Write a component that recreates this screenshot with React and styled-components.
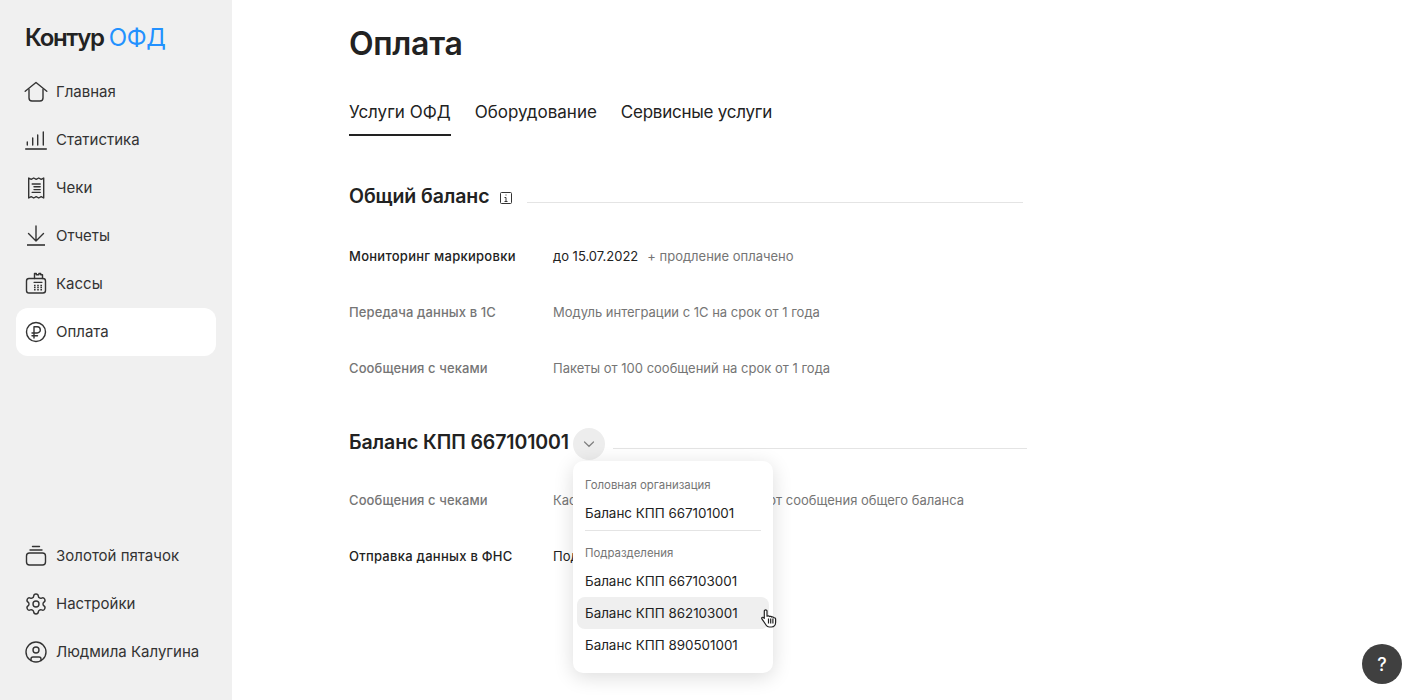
import React from "react";
import styled, { createGlobalStyle } from "styled-components";
import { Settings, CircleUser } from "lucide-react";

const GlobalStyle = createGlobalStyle`
  html, body {
    margin: 0;
    height: 100%;
    background: #fff;
    color: #222;
    font-family: Inter, "Noto Sans", "Liberation Sans", sans-serif;
  }
  * {
    box-sizing: border-box;
  }
`;

const Page = styled.div`
  display: flex;
  height: 700px;
  overflow: hidden;
`;

const Sidebar = styled.aside`
  width: 232px;
  flex-shrink: 0;
  padding: 0 16px 24px;
  display: flex;
  flex-direction: column;
  background: #f0f0f0;
`;

const Logo = styled.div`
  height: 68px;
  padding: 7px 0 0 9px;
  display: flex;
  align-items: center;
  gap: 5px;
  font-size: 24px;
  span:first-child {
    font-weight: 600;
    letter-spacing: -1.3px;
    color: #222;
  }
  span:last-child {
    color: #2291ff;
    letter-spacing: -0.4px;
  }
`;

const Nav = styled.nav`
  display: flex;
  flex-direction: column;
  &:last-child {
    margin-top: auto;
  }
`;

const NavItem = styled.a`
  height: 48px;
  padding: 0 8px;
  display: flex;
  align-items: center;
  gap: 8px;
  border-radius: 12px;
  font-size: 15px;
  line-height: 22px;
  color: #333;
  background: ${(p) => (p.$active ? "#fff" : "transparent")};
  svg {
    flex-shrink: 0;
  }
  span {
    margin-top: -1px;
  }
`;

const Main = styled.main`
  flex: 1;
  padding-left: 117px;
`;

const Title = styled.h1`
  margin: 0;
  height: 88px;
  line-height: 88px;
  font-size: 32px;
  font-weight: 600;
  letter-spacing: -0.3px;
  color: #222;
`;

const Tabs = styled.div`
  display: flex;
  gap: 24px;
  height: 48px;
`;

const Tab = styled.a`
  padding-top: 12px;
  font-size: 17px;
  line-height: 24px;
  letter-spacing: ${(p) => (p.$tight ? "-0.25px" : "0")};
  color: #222;
  border-bottom: 2px solid ${(p) => (p.$active ? "#222" : "transparent")};
`;

const Section = styled.section`
  width: ${(p) => p.$width}px;
  margin-top: ${(p) => p.$top}px;
`;

const Heading = styled.div`
  position: relative;
  height: 32px;
  display: flex;
  align-items: center;
  margin-bottom: ${(p) => p.$below}px;
`;

const HeadingText = styled.h2`
  margin: 0;
  font-size: 19.5px;
  letter-spacing: -0.1px;
  line-height: 32px;
  font-weight: 600;
  color: #222;
  white-space: nowrap;
`;

const InfoMark = styled.svg`
  margin-left: 11px;
  margin-top: 4px;
  flex-shrink: 0;
`;

const Toggle = styled.div`
  width: 32px;
  height: 32px;
  margin: 4px 0 0 4px;
  flex-shrink: 0;
  display: flex;
  align-items: center;
  justify-content: center;
  border-radius: 50%;
  background: #ededed;
`;

const Rule = styled.div`
  flex: 1;
  height: 1px;
  margin: 13px 0 0 ${(p) => p.$gap}px;
  background: #e4e4e4;
`;

const Row = styled.div`
  display: flex;
  align-items: center;
  height: 56px;
  font-size: 13px;
`;

const Label = styled.div`
  width: 204px;
  flex-shrink: 0;
  font-weight: 500;
  letter-spacing: ${(p) => (p.$on ? "0.27px" : "0.1px")};
  color: ${(p) => (p.$on ? "#222" : "#757575")};
`;

const Value = styled.div`
  color: ${(p) => (p.$on ? "#222" : "#757575")};
  white-space: nowrap;
  span {
    margin-left: 9px;
    color: #757575;
  }
`;

const Menu = styled.div`
  position: absolute;
  left: 224px;
  top: 35px;
  z-index: 2;
  width: 200px;
  height: 212px;
  padding: 12px 4px;
  background: #fff;
  border-radius: 10px;
  box-shadow: 0 4px 20px rgba(0, 0, 0, 0.14);
`;

const MenuLabel = styled.div`
  height: 24px;
  padding: 0 8px;
  font-size: 11.4px;
  line-height: 24px;
  color: #757575;
`;

const MenuItem = styled.div`
  position: relative;
  height: 32px;
  padding: 0 8px;
  font-size: 13.4px;
  line-height: 32px;
  color: #222;
  border-radius: 8px;
  background: ${(p) => (p.$hover ? "#efefef" : "transparent")};
`;

const MenuDivider = styled.div`
  height: 1px;
  margin: 1px 8px 10px;
  background: #e4e4e4;
`;

const Pointer = styled.svg`
  position: absolute;
  left: 184px;
  top: 12px;
`;

const HelpButton = styled.div`
  position: fixed;
  right: 16px;
  bottom: 16px;
  width: 40px;
  height: 40px;
  display: flex;
  align-items: center;
  justify-content: center;
  border-radius: 50%;
  background: #404040;
  color: #fff;
  font-size: 18px;
  font-weight: 500;
`;

const Icon = ({ children }) => (
  <svg width="24" height="24" viewBox="0 0 24 24" fill="none" stroke="#333" strokeWidth="1.4" strokeLinecap="round" strokeLinejoin="round">
    {children}
  </svg>
);

const HomeIcon = () => (
  <Icon>
    <path d="M1.200 11.200 12 2.500l10.800 8.700" />
    <path d="M5 9.500V18a3 3 0 0 0 3 3h8a3 3 0 0 0 3-3V9.500" />
  </Icon>
);

const StatsIcon = () => (
  <Icon>
    <path d="M3.300 14v3M8.700 10v7M13.700 7v10M19.300 4v13" />
    <path d="M1.200 21h21.600" strokeLinecap="butt" strokeWidth="1.600" />
  </Icon>
);

const ReceiptIcon = () => (
  <Icon>
    <path d="M4.700 2v20l2.500-1.400L9.700 22l2.500-1.400 2.500 1.400 2.500-1.400 2.500 1.400V2l-2.500 1.400L14.700 2l-2.500 1.400L9.700 2 7.200 3.400z" />
    <path d="M8.200 8h8M10 10.800h6.200M10 13.600h6.200M8.200 16.400h8" />
  </Icon>
);

const DownloadIcon = () => (
  <Icon>
    <path d="M12 2v15M4.500 9.500 12 17l7.500-7.500" />
    <path d="M3 21h18" strokeLinecap="butt" strokeWidth="1.600" />
  </Icon>
);

const CashIcon = () => (
  <Icon>
    <rect x="2.500" y="6.500" width="19" height="14.500" rx="2.500" />
    <path d="M10.500 6.500V1.500h1.800v1.300h2.600V1.500h1.800v1.300h1.800V6.500" />
    <path d="M10 10.300h8" strokeWidth="1.200" />
    <path d="M10 13.400h1.600M13.200 13.400h1.600M16.400 13.400h1.600M10 15.600h1.600M13.200 15.600h1.600M16.400 15.600h1.600M10 17.800h1.600M13.200 17.800h1.600M16.400 17.800h1.600" strokeWidth="1.500" strokeLinecap="butt" />
  </Icon>
);

const RubleIcon = () => (
  <Icon>
    <circle cx="12" cy="12" r="9.500" />
    <path d="M10 18V6.800h3.200a3.100 3.100 0 0 1 0 6.200H8M8 15.700h5.500" />
  </Icon>
);

const StackIcon = () => (
  <Icon>
    <rect x="2.500" y="9" width="19" height="12" rx="3" />
    <path d="M6 6h12M8.500 2.500h7" />
  </Icon>
);

export default function App() {
  return (
    <Page>
      <GlobalStyle />
      <Sidebar>
        <Logo>
          <span>Контур</span>
          <span>ОФД</span>
        </Logo>
        <Nav>
          <NavItem><HomeIcon /><span>Главная</span></NavItem>
          <NavItem><StatsIcon /><span>Статистика</span></NavItem>
          <NavItem><ReceiptIcon /><span>Чеки</span></NavItem>
          <NavItem><DownloadIcon /><span>Отчеты</span></NavItem>
          <NavItem><CashIcon /><span>Кассы</span></NavItem>
          <NavItem $active><RubleIcon /><span>Оплата</span></NavItem>
        </Nav>
        <Nav>
          <NavItem><StackIcon /><span>Золотой пятачок</span></NavItem>
          <NavItem><Settings size={24} color="#333" strokeWidth={1.4} /><span>Настройки</span></NavItem>
          <NavItem><CircleUser size={24} color="#333" strokeWidth={1.4} /><span>Людмила Калугина</span></NavItem>
        </Nav>
      </Sidebar>

      <Main>
        <Title>Оплата</Title>
        <Tabs>
          <Tab $active>Услуги ОФД</Tab>
          <Tab>Оборудование</Tab>
          <Tab $tight>Сервисные услуги</Tab>
        </Tabs>

        <Section $width={674} $top={44}>
          <Heading $below={16}>
            <HeadingText>Общий баланс</HeadingText>
            <InfoMark width="12" height="12" viewBox="0 0 12 12" fill="none" stroke="#333">
              <rect x="0.500" y="0.500" width="11" height="11" rx="1" strokeWidth="1" />
              <path d="M6 2.500v1M4.500 5.500H6V9.500M4.500 9.500h3" strokeWidth="1" />
            </InfoMark>
            <Rule $gap={15} />
          </Heading>
          <Row>
            <Label $on>Мониторинг маркировки</Label>
            <Value $on>до 15.07.2022<span>+ продление оплачено</span></Value>
          </Row>
          <Row>
            <Label>Передача данных в 1С</Label>
            <Value>Модуль интеграции с 1С на срок от 1 года</Value>
          </Row>
          <Row>
            <Label>Сообщения с чеками</Label>
            <Value>Пакеты от 100 сообщений на срок от 1 года</Value>
          </Row>
        </Section>

        <Section $width={678} $top={30}>
          <Heading $below={14}>
            <HeadingText>Баланс КПП 667101001</HeadingText>
            <Toggle>
              <svg width="12" height="12" viewBox="0 0 12 12" fill="none" stroke="#808080" strokeWidth="1.200" strokeLinecap="round">
                <path d="M1.500 4 6 8.300 10.500 4" />
              </svg>
            </Toggle>
            <Rule $gap={8} />
            <Menu>
              <MenuLabel>Головная организация</MenuLabel>
              <MenuItem>Баланс КПП 667101001</MenuItem>
              <MenuDivider />
              <MenuLabel>Подразделения</MenuLabel>
              <MenuItem>Баланс КПП 667103001</MenuItem>
              <MenuItem $hover>
                Баланс КПП 862103001
                <Pointer width="16" height="19" viewBox="0 0 16 19" fill="#fff" stroke="#222" strokeWidth="1.200" strokeLinejoin="round">
                  <path d="M3.300 2c0-1.500 2.700-1.500 2.700 0v5.200c.8-.6 2-.4 2.400.4.800-.5 1.900-.3 2.300.5.800-.4 1.900-.1 2.200.7.800-.2 1.700.4 1.700 1.300v3.500c0 2.400-1.600 4.400-4 4.400H8.200c-1.300 0-2.300-.6-3-1.700L.9 9.800c-.6-.9.600-2 1.500-1.300l.9.800z" />
                  <path d="M7.500 9.500v5M9.700 9.500v5M11.900 9.500v5" fill="none" />
                </Pointer>
              </MenuItem>
              <MenuItem>Баланс КПП 890501001</MenuItem>
            </Menu>
          </Heading>
          <Row>
            <Label>Сообщения с чеками</Label>
            <Value>Кассы с этим КПП тратят пакеты от сообщения общего баланса</Value>
          </Row>
          <Row>
            <Label $on>Отправка данных в ФНС</Label>
            <Value $on>Подключена</Value>
          </Row>
        </Section>
      </Main>

      <HelpButton>?</HelpButton>
    </Page>
  );
}
